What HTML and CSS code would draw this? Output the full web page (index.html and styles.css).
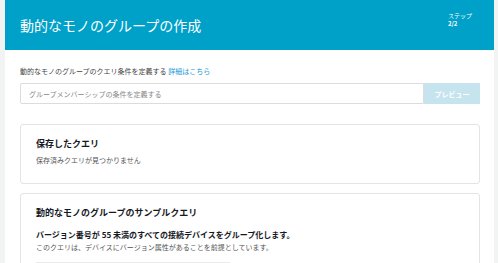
FILE: index.html
```html
<!DOCTYPE html>
<html>
<head>
    <meta charset="UTF-8">
    <title>動的なモノのグループの作成</title>
    <link rel="stylesheet" href="styles.css">
</head>
<body>
    <div class="page">
        <div class="header">
            <h1>動的なモノのグループの作成</h1>
            <div class="step">ステップ<br><b>2/2</b></div>
        </div>
        <div class="content">
            <p class="query-label">動的なモノのグループのクエリ条件を定義する <a href="#" class="info-link">詳細はこちら</a></p>
            <div class="query-row">
                <input type="text" class="query-input" placeholder="グループメンバーシップの条件を定義する">
                <button type="button" class="preview-btn" disabled>プレビュー</button>
            </div>
            <div class="card">
                <h2>保存したクエリ</h2>
                <p class="muted">保存済みクエリが見つかりません</p>
            </div>
            <div class="card">
                <h2>動的なモノのグループのサンプルクエリ</h2>
                <h3>バージョン番号が 55 未満のすべての接続デバイスをグループ化します。</h3>
                <p class="muted">このクエリは、デバイスにバージョン属性があることを前提としています。</p>
                <div class="code-box"></div>
            </div>
        </div>
    </div>
</body>
</html>
```

FILE: styles.css
```css
body {
    font-family: "Noto Sans CJK JP", "Noto Sans", sans-serif;
    background-color: #f2f3f3;
    margin: 0;
    padding: 0;
}
.page {
    margin: 0 4px 0 5px;
    min-height: 263px;
    background-color: #fff;
}
.header {
    height: 50px;
    background-color: #00a1c9;
    color: #fff;
    display: flex;
    justify-content: space-between;
    padding: 0 15px;
}
.header h1 {
    margin: 0;
    font-size: 14px;
    font-weight: normal;
    line-height: 50px;
}
.step {
    font-size: 6px;
    line-height: 8px;
    padding-top: 12px;
    width: 31px;
}
.content {
    padding: 16px 14px 0 15px;
}
.query-label {
    margin: 0;
    font-size: 7px;
    line-height: 10px;
    color: #444;
}
.info-link {
    color: #1a9ad6;
    text-decoration: none;
}
.query-row {
    display: flex;
    margin-top: 7px;
}
.query-input {
    flex: 1;
    height: 21px;
    box-sizing: border-box;
    border: 1px solid #dcdcdc;
    border-radius: 2px 0 0 2px;
    padding: 0 8px;
    font-family: inherit;
    font-size: 7px;
    color: #444;
}
.query-input::placeholder {
    color: #888;
}
.preview-btn {
    width: 56px;
    height: 21px;
    border: none;
    background-color: #c6e4ee;
    color: #fff;
    font-family: inherit;
    font-size: 7px;
    font-weight: bold;
}
.card {
    border: 1px solid #e4e4e4;
    border-radius: 3px;
    padding: 14px 15px 18px;
    margin-top: 20px;
}
.card + .card {
    margin-top: 9px;
}
.card h2 {
    margin: 0;
    font-size: 9px;
    line-height: 10px;
    color: #16191f;
}
.card h3 {
    margin: 11px 0 0;
    font-size: 8px;
    line-height: 11px;
    color: #16191f;
}
.muted {
    margin: 6px 0 0;
    font-size: 7px;
    line-height: 10px;
    color: #555;
}
.card h3 + .muted {
    margin-top: 2px;
}
.code-box {
    width: 192px;
    height: 30px;
    margin-top: 10px;
    background-color: #f6f6f6;
    border: 1px solid #eaeaea;
}
```
